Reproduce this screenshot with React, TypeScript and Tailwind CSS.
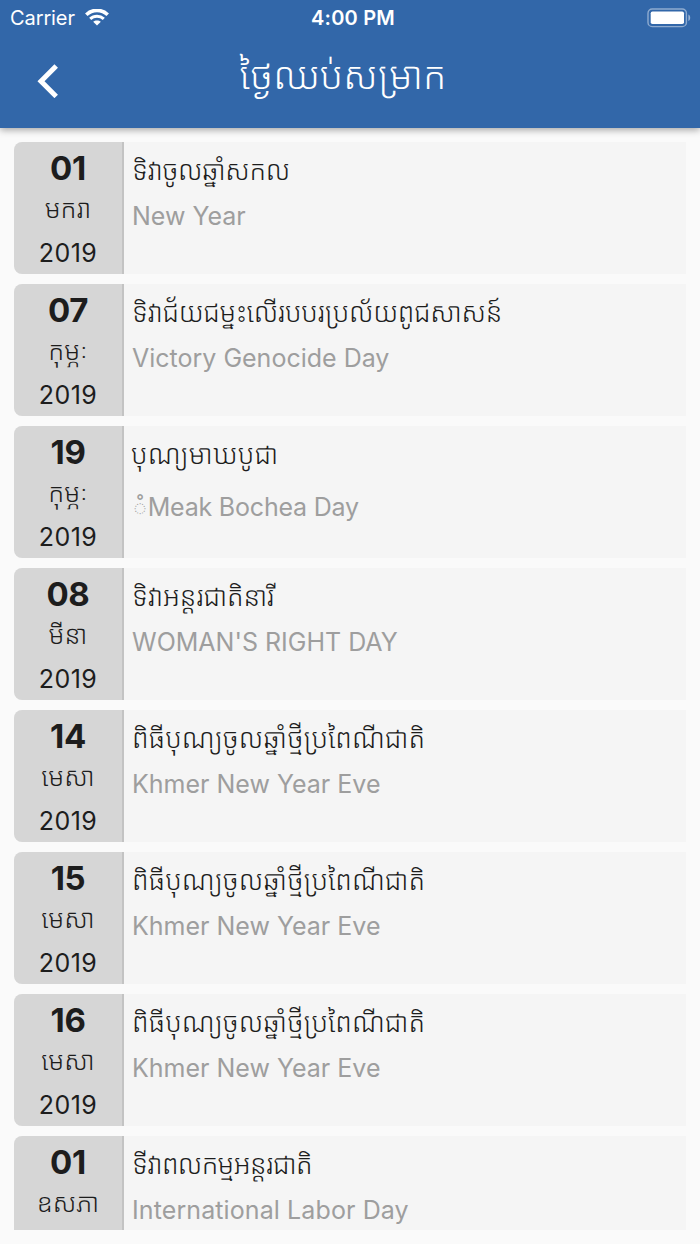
type Holiday = {
  day: string;
  month: string;
  year?: string;
  title: string;
  subtitle: string;
  titleClass?: string;
  subtitleClass?: string;
};

const holidays: Holiday[] = [
  { day: "01", month: "មករា", year: "2019", title: "ទិវាចូលឆ្នាំសកល", subtitle: "New Year", titleClass: "tracking-[-0.4px]" },
  { day: "07", month: "កុម្ភៈ", year: "2019", title: "ទិវាជ័យជម្នះលើរបបរប្រល័យពូជសាសន៍", subtitle: "Victory Genocide Day", titleClass: "tracking-[-0.35px]" },
  { day: "19", month: "កុម្ភៈ", year: "2019", title: "បុណ្យមាឃបូជា", subtitle: "ំMeak Bochea Day", titleClass: "-ml-px tracking-[0.1px]", subtitleClass: "mt-[7px] tracking-[-0.2px]" },
  { day: "08", month: "មីនា", year: "2019", title: "ទិវាអន្តរជាតិនារី", subtitle: "WOMAN'S RIGHT DAY", titleClass: "tracking-[-0.2px]" },
  { day: "14", month: "មេសា", year: "2019", title: "ពិធីបុណ្យចូលឆ្នាំថ្មីប្រពៃណីជាតិ", subtitle: "Khmer New Year Eve" },
  { day: "15", month: "មេសា", year: "2019", title: "ពិធីបុណ្យចូលឆ្នាំថ្មីប្រពៃណីជាតិ", subtitle: "Khmer New Year Eve" },
  { day: "16", month: "មេសា", year: "2019", title: "ពិធីបុណ្យចូលឆ្នាំថ្មីប្រពៃណីជាតិ", subtitle: "Khmer New Year Eve" },
  { day: "01", month: "ឧសភា", title: "ទីវាពលកម្មអន្តរជាតិ", subtitle: "International Labor Day", titleClass: "tracking-[-0.65px]", subtitleClass: "tracking-[0.1px]" },
];

const WifiIcon = () => (
  <svg className="ml-[10px] h-[18px] w-6" viewBox="0 0 24 18" fill="none">
    <path d="M1.3 5.7C7.3 -.1 16.7 -.1 22.7 5.7" stroke="white" strokeWidth="3.6" />
    <path d="M5.2 9.9C9 6.3 15 6.3 18.8 9.9" stroke="white" strokeWidth="3" />
    <path d="M12 16.6L8.2 12.8C10.2 10.9 13.8 10.9 15.8 12.8Z" fill="white" />
  </svg>
);

const BatteryIcon = () => (
  <svg className="h-5 w-11" viewBox="0 0 44 20" fill="none">
    <rect x="1" y="1" width="38.4" height="17.6" rx="4.2" stroke="white" strokeOpacity=".45" strokeWidth="1.4" />
    <rect x="3.7" y="3.5" width="33.3" height="12.6" rx="1.8" fill="white" />
    <path d="M41.4 6.5C43.8 7.4 43.8 12 41.4 12.9Z" fill="white" fillOpacity=".5" />
  </svg>
);

const StatusBar = () => (
  <div className="grid h-9 grid-cols-3 items-center text-[20px] leading-9 text-white">
    <div className="flex items-center pl-[10px]">
      <span className="tracking-[-0.1px]">Carrier</span>
      <WifiIcon />
    </div>
    <span className="pl-1.5 text-center font-semibold tracking-[0.2px]">4:00 PM</span>
    <div className="flex justify-end pr-[9px]">
      <BatteryIcon />
    </div>
  </div>
);

const Header = () => (
  <header className="h-32 shrink-0 bg-[#3267a9] shadow-[0_2px_7px_rgba(0,0,0,0.35)]">
    <StatusBar />
    <div className="grid h-[92px] grid-cols-[100px_1fr_114px] text-white">
      <button className="flex items-start pt-[28px] pl-[37px]">
        <svg className="h-[34px] w-[23px]" viewBox="0 0 23 34" fill="none">
          <path d="M19.2 2L4 17.2L19.2 32.4" stroke="white" strokeWidth="5" />
        </svg>
      </button>
      <h1 className="pt-[19px] text-center text-[38px] leading-[40px] font-light tracking-[0.1px] whitespace-nowrap">ថ្ងៃឈប់សម្រាក</h1>
    </div>
  </header>
);

const HolidayCard = ({ day, month, year, title, subtitle, titleClass, subtitleClass }: Holiday) => (
  <div className="flex h-[132px] shrink-0 overflow-hidden rounded-l-lg bg-[#f5f5f5]">
    <div className="flex w-[110px] shrink-0 flex-col items-center border-r-2 border-[#c3c3c3] bg-[#d6d6d6] text-[26px] text-[#1d1d1d]">
      <p className="h-[50px] text-[33px] leading-[52px] font-bold tracking-[-0.3px]">{day}</p>
      <p className="h-9 leading-[34px] font-light whitespace-nowrap">{month}</p>
      {year && <p className="pt-0.5 text-[25px] leading-[51px] tracking-[0.5px]">{year}</p>}
    </div>
    <div className="pl-[8px] text-[27px] whitespace-nowrap">
      <p className={`h-[52px] pt-[11px] leading-9 font-light text-[#1d1d1d] ${titleClass ?? ""}`}>{title}</p>
      <p className={`text-[25px] leading-[45px] text-[#9e9e9e] ${subtitleClass ?? ""}`}>{subtitle}</p>
    </div>
  </div>
);

const App = () => {
  return (
    <div className="flex h-[1244px] w-[700px] flex-col overflow-hidden bg-[#fafafa] pb-3.5 font-[Inter,'Noto_Sans_Khmer','DejaVu_Sans',sans-serif]">
      <Header />
      <main className="flex min-h-0 flex-1 flex-col gap-2.5 overflow-hidden px-3.5 pt-3.5">
        {holidays.map((holiday, index) => (
          <HolidayCard key={index} {...holiday} />
        ))}
      </main>
    </div>
  );
};

export default App;
